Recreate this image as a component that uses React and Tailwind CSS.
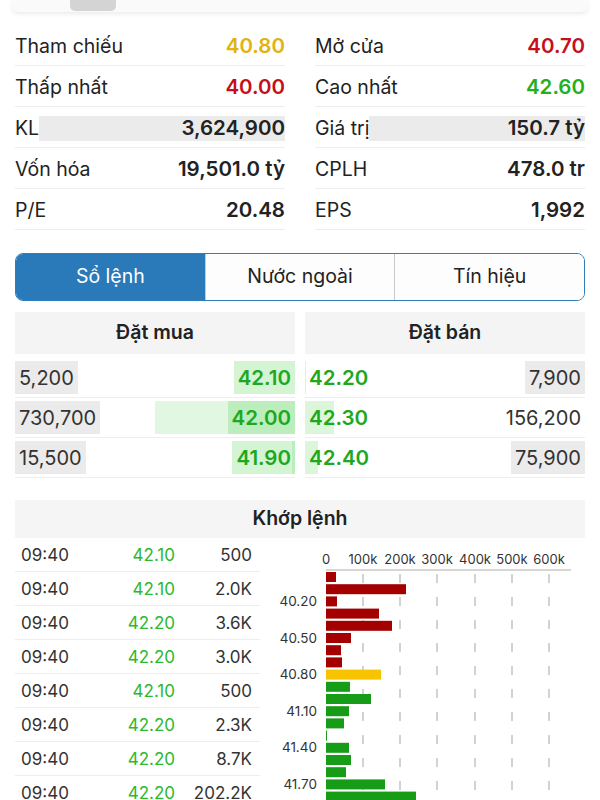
import React from "react";

const leftStats = [
  { label: "Tham chiếu", value: "40.80", color: "text-[#e3b20d]" },
  { label: "Thấp nhất", value: "40.00", color: "text-[#c5101b]" },
  { label: "KL", value: "3,624,900", color: "text-[#222]", bar: true },
  { label: "Vốn hóa", value: "19,501.0 tỷ", color: "text-[#222]" },
  { label: "P/E", value: "20.48", color: "text-[#222]" },
];
const rightStats = [
  { label: "Mở cửa", value: "40.70", color: "text-[#c5101b]" },
  { label: "Cao nhất", value: "42.60", color: "text-[#22b022]" },
  { label: "Giá trị", value: "150.7 tỷ", color: "text-[#222]", bar: true },
  { label: "CPLH", value: "478.0 tr", color: "text-[#222]" },
  { label: "EPS", value: "1,992", color: "text-[#222]" },
];

function Stat({ label, value, color, bar }) {
  return (
    <div className="flex items-center h-[41px] pt-[3px] border-b border-[#ededed]">
      <span className="text-[19.5px] text-[#222] whitespace-nowrap">{label}</span>
      {bar ? (
        <div className="flex-1 h-[25px] bg-[#ebebeb] flex items-center justify-end">
          <span className={`text-[20.5px] font-semibold ${color}`}>{value}</span>
        </div>
      ) : (
        <span className={`ml-auto text-[20.5px] font-semibold ${color}`}>{value}</span>
      )}
    </div>
  );
}

const buys = [
  { vol: "5,200", price: "42.10", bar: 0 },
  { vol: "730,700", price: "42.00", bar: 140 },
  { vol: "15,500", price: "41.90", bar: 3 },
];
const sells = [
  { vol: "7,900", price: "42.20", bar: 1, box: true },
  { vol: "156,200", price: "42.30", bar: 29, box: false },
  { vol: "75,900", price: "42.40", bar: 13, box: true },
];

const trades = [
  ["09:40", "42.10", "500"],
  ["09:40", "42.10", "2.0K"],
  ["09:40", "42.20", "3.6K"],
  ["09:40", "42.20", "3.0K"],
  ["09:40", "42.10", "500"],
  ["09:40", "42.20", "2.3K"],
  ["09:40", "42.20", "8.7K"],
  ["09:40", "42.20", "202.2K"],
];

const bars = [
  [10, "r"], [80, "r"], [11, "r"], [53, "r"], [66, "r"], [25, "r"], [15, "r"], [16, "r"],
  [55, "y"], [24, "g"], [45, "g"], [23, "g"], [18, "g"], [1, "g"], [23, "g"], [25, "g"],
  [20, "g"], [59, "g"], [90, "g"],
];
const barColor = { r: "#a40000", y: "#f8c400", g: "#169c16" };
const priceLabels = { 2: "40.20", 5: "40.50", 8: "40.80", 11: "41.10", 14: "41.40", 17: "41.70" };

function Chart() {
  const x0 = 66;
  const ticks = [
    ["0", 66], ["100k", 103], ["200k", 140], ["300k", 177], ["400k", 215], ["500k", 252], ["600k", 289],
  ];
  return (
    <svg width="325" height="263" viewBox="0 0 325 263" className="block">
      {ticks.map(([t, x]) => (
        <text key={t} x={x} y="26" textAnchor="middle" fontSize="13" fill="#333" fontFamily="Inter, sans-serif">
          {t}
        </text>
      ))}
      {ticks.slice(1).map(([t, x]) => (
        <line key={"g" + t} x1={x} y1="36" x2={x} y2="263" stroke="#c4c4c4" strokeWidth="1.5" strokeDasharray="9 14" />
      ))}
      <line x1={x0} y1="32" x2="311" y2="32" stroke="#c8c8c8" strokeWidth="1.5" />
      {bars.map(([w, c], i) => (
        <rect key={i} x={x0} y={34 + i * 12.2} width={w} height="10" fill={barColor[c]} />
      ))}
      {Object.entries(priceLabels).map(([i, l]) => (
        <text key={l} x="57" y={34 + Number(i) * 12.2 + 9.5} textAnchor="end" fontSize="13.5" fill="#333" fontFamily="Inter, sans-serif">
          {l}
        </text>
      ))}
    </svg>
  );
}

export default function App() {
  return (
    <div className="w-[600px] h-[800px] overflow-hidden bg-white font-[Inter,sans-serif] text-[#222]">
      {/* top card (cut off) */}
      <div className="mx-[12px] h-[12px] bg-[#fafafa] rounded-b-[6px] shadow-[0_2px_4px_rgba(0,0,0,0.08)] relative">
        <div className="absolute left-[58px] top-0 w-[46px] h-[11px] bg-[#d4d4d4] rounded-b-[5px]" />
      </div>

      {/* stats */}
      <div className="mt-[13px] px-[15px] grid grid-cols-2 gap-x-[30px]">
        <div>
          {leftStats.map((s) => (
            <Stat key={s.label} {...s} />
          ))}
        </div>
        <div>
          {rightStats.map((s) => (
            <Stat key={s.label} {...s} />
          ))}
        </div>
      </div>

      {/* tabs */}
      <div className="mx-[15px] mt-[23px] h-[48px] flex rounded-[8px] border-[1.5px] border-[#2f7dbb] overflow-hidden">
        <div className="flex-1 bg-[#2a79b8] text-white flex items-center justify-center text-[19.5px]">Sổ lệnh</div>
        <div className="flex-1 flex items-center justify-center text-[19.5px] border-l border-[#c9c9c9] bg-[#fdfdfd]">Nước ngoài</div>
        <div className="flex-1 flex items-center justify-center text-[19.5px] border-l border-[#c9c9c9] bg-[#fdfdfd]">Tín hiệu</div>
      </div>

      {/* order book */}
      <div className="mx-[15px] mt-[11px] grid grid-cols-2 gap-x-[10px]">
        <div>
          <div className="h-[42px] bg-[#f4f4f4] flex items-center justify-center text-[19.5px] font-semibold">Đặt mua</div>
          <div className="mt-[4px]">
            {buys.map((b) => (
              <div key={b.price} className="relative h-[40px] py-[3px] border-b border-[#eeeeee] flex items-stretch">
                <div className="absolute right-0 top-[3px] bottom-[3px] bg-[rgba(40,200,40,0.14)]" style={{ width: b.bar }} />
                <span className="relative bg-[#ebebeb] px-[4px] pt-[1px] flex items-center text-[20px] text-[#333]">{b.vol}</span>
                <span className="relative ml-auto bg-[rgba(40,200,40,0.2)] px-[4px] pt-[1px] flex items-center text-[20.5px] font-semibold text-[#1ea81e]">{b.price}</span>
              </div>
            ))}
          </div>
        </div>
        <div>
          <div className="h-[42px] bg-[#f4f4f4] flex items-center justify-center text-[19.5px] font-semibold">Đặt bán</div>
          <div className="mt-[4px]">
            {sells.map((s) => (
              <div key={s.price} className="relative h-[40px] py-[3px] border-b border-[#eeeeee] flex items-stretch">
                <div className="absolute left-0 top-[3px] bottom-[3px] bg-[rgba(40,200,40,0.16)]" style={{ width: s.bar }} />
                <span className="relative px-[4px] pt-[1px] flex items-center text-[20.5px] font-semibold text-[#1ea81e]">{s.price}</span>
                <span className={`relative ml-auto px-[4px] pt-[1px] flex items-center text-[20px] text-[#333] ${s.box ? "bg-[#ebebeb]" : ""}`}>{s.vol}</span>
              </div>
            ))}
          </div>
        </div>
      </div>

      {/* matched orders */}
      <div className="mx-[15px] mt-[22px] h-[38px] bg-[#f5f5f5] flex items-center justify-center text-[19.5px] font-semibold">Khớp lệnh</div>
      <div className="flex pl-[15px]">
        <div className="w-[245px]">
          {trades.map((t, i) => (
            <div key={i} className="h-[34px] pt-[2px] border-b border-[#eeeeee] flex items-center text-[17px]">
              <span className="w-[100px] pl-[6px] text-[#333]">{t[0]}</span>
              <span className="w-[60px] text-right text-[#2db82d]">{t[1]}</span>
              <span className="w-[77px] text-right text-[#333]">{t[2]}</span>
            </div>
          ))}
        </div>
        <Chart />
      </div>
    </div>
  );
}
